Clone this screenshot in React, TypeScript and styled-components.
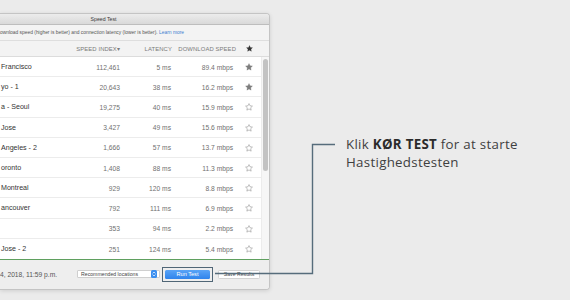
import React from "react";
import styled, { createGlobalStyle } from "styled-components";

const GlobalStyle = createGlobalStyle`
  html, body { margin: 0; padding: 0; background: #ebebeb; }
  body { overflow: hidden; font-family: "Liberation Sans", Arial, sans-serif; }
`;

const Page = styled.div`
  position: relative;
  width: 570px;
  height: 300px;
  display: flex;
  align-items: flex-start;
  background: #ebebeb;
`;

const Window = styled.div`
  margin-top: 13px;
  width: 269px;
  height: 275px;
  display: flex;
  flex-direction: column;
  border: 1px solid #c4c4c4;
  border-left: none;
  border-radius: 0 4px 4px 0;
  background: #f3f3f3;
  box-shadow: 0 1px 4px rgba(0, 0, 0, 0.12);
  overflow: hidden;
`;

const TitleBar = styled.div`
  height: 10px;
  display: flex;
  align-items: center;
  justify-content: center;
  padding-right: 62px;
  background: linear-gradient(#ececec, #d9d9d9);
  border-bottom: 1px solid #bdbdbd;
  font-size: 5.2px;
  color: #3a3a3a;
`;

const Info = styled.div`
  height: 15px;
  display: flex;
  align-items: center;
  border-bottom: 1px solid #dedede;
  font-size: 4.9px;
  color: #555;
  white-space: nowrap;
`;

const Link = styled.span`
  color: #3f7fd1;
`;

const cols = "70px 50px 51px 62px 28px";

const HeaderRow = styled.div`
  height: 15px;
  display: grid;
  grid-template-columns: ${cols};
  align-items: center;
  border-bottom: 1px solid #dcdcdc;
  font-size: 5.9px;
  color: #7a7a7a;
  letter-spacing: 0.1px;
`;

const HeadCell = styled.div<{ $shift?: number }>`
  text-align: right;
  margin-right: ${(p) => p.$shift ?? 0}px;
  white-space: nowrap;
`;

const StarCell = styled.div`
  display: flex;
  justify-content: center;
  padding-left: 4px;
`;

const Body = styled.div`
  height: 202px;
  display: flex;
  background: #fff;
`;

const Rows = styled.div`
  flex: 1;
  display: flex;
  flex-direction: column;
`;

const Row = styled.div`
  height: 20.2px;
  box-sizing: border-box;
  display: grid;
  grid-template-columns: ${cols};
  align-items: center;
  padding-top: 1px;
  border-bottom: 1px solid #ececec;
  &:last-child { border-bottom: none; }
`;

const Name = styled.div`
  font-size: 7.1px;
  color: #333;
  white-space: nowrap;
  padding-left: 1px;
`;

const Num = styled.div`
  font-size: 6.7px;
  color: #6f6f6f;
  text-align: right;
  white-space: nowrap;
`;

const Track = styled.div`
  width: 7px;
  background: #f6f6f6;
  border-left: 1px solid #ececec;
  display: flex;
  justify-content: center;
  padding-top: 2px;
`;

const Thumb = styled.div`
  width: 4.5px;
  height: 112px;
  border-radius: 3px;
  background: #c3c3c3;
`;

const GreenLine = styled.div`
  height: 1px;
  background: #5fa05f;
`;

const Footer = styled.div`
  flex: 1;
  display: flex;
  align-items: center;
  background: #eeeeee;
  padding-bottom: 1px;
`;

const DateText = styled.div`
  width: 77px;
  font-size: 6.7px;
  color: #555;
  white-space: nowrap;
`;

const Select = styled.div`
  width: 83px;
  height: 8px;
  box-sizing: border-box;
  display: flex;
  align-items: center;
  justify-content: space-between;
  background: #fff;
  border: 1px solid #cfcfcf;
  border-radius: 1px;
  padding-left: 3px;
  font-size: 5.2px;
  color: #444;
  white-space: nowrap;
`;

const Stepper = styled.div`
  width: 6px;
  height: 8px;
  margin-right: 2px;
  border-radius: 1.5px;
  background: #3b8ff0;
  display: flex;
  align-items: center;
  justify-content: center;
`;

const Highlight = styled.div`
  margin-left: 2px;
  padding: 2px;
  border: 1.5px solid #506676;
  display: flex;
`;

const RunButton = styled.div`
  width: 45px;
  height: 9px;
  border-radius: 1.5px;
  background: linear-gradient(#5aa4f7, #2f84ec);
  color: #fff;
  font-size: 5.6px;
  display: flex;
  align-items: center;
  justify-content: center;
`;

const SaveButton = styled.div`
  margin-left: 5px;
  width: 42px;
  height: 9px;
  box-sizing: border-box;
  border: 1px solid #d3d3d3;
  border-radius: 1.5px;
  background: #fff;
  color: #444;
  font-size: 5.2px;
  white-space: nowrap;
  display: flex;
  align-items: center;
  justify-content: center;
`;

const Callout = styled.div`
  margin-left: 76px;
  margin-top: 136px;
  font-family: "Open Sans", "Liberation Sans", sans-serif;
  font-size: 13.3px;
  letter-spacing: 0.3px;
  line-height: 17.7px;
  color: #3f3f3f;
  white-space: nowrap;
`;

const Bold = styled.b`
  font-weight: 700;
  color: #2b2b2b;
`;

const Connector = styled.svg`
  position: absolute;
  left: 0;
  top: 0;
  pointer-events: none;
`;

const StarIcon: React.FC<{ filled?: boolean; dark?: boolean; size?: number }> = ({
  filled,
  dark,
  size = 8,
}) => (
  <svg width={size} height={size} viewBox="0 0 24 24">
    <path
      d="M12 1.8l3.1 6.6 7.2.9-5.3 5 1.4 7.1L12 17.9l-6.4 3.5 1.4-7.1-5.3-5 7.2-.9z"
      fill={filled ? (dark ? "#333" : "#7d7d7d") : "none"}
      stroke={filled ? (dark ? "#333" : "#7d7d7d") : "#8a8a8a"}
      strokeWidth={filled ? 1 : 1.6}
      strokeLinejoin="round"
    />
  </svg>
);

const data = [
  ["Francisco", "112,461", "5 ms", "89.4 mbps", true],
  ["yo - 1", "20,643", "38 ms", "16.2 mbps", true],
  ["a - Seoul", "19,275", "40 ms", "15.9 mbps", false],
  ["Jose", "3,427", "49 ms", "15.6 mbps", false],
  ["Angeles - 2", "1,666", "57 ms", "13.7 mbps", false],
  ["oronto", "1,408", "88 ms", "11.3 mbps", false],
  ["Montreal", "929", "120 ms", "8.8 mbps", false],
  ["ancouver", "792", "111 ms", "6.9 mbps", false],
  ["", "353", "94 ms", "2.2 mbps", false],
  ["Jose - 2", "251", "124 ms", "5.4 mbps", false],
] as const;

export default function App() {
  return (
    <>
      <GlobalStyle />
      <Page>
        <Window>
          <TitleBar>Speed Test</TitleBar>
          <Info>
            ownload speed (higher is better) and connection latency (lower is better).&nbsp;
            <Link>Learn more</Link>
          </Info>
          <HeaderRow>
            <div />
            <HeadCell>SPEED INDEX▾</HeadCell>
            <HeadCell $shift={-1}>LATENCY</HeadCell>
            <HeadCell $shift={-3}>DOWNLOAD SPEED</HeadCell>
            <StarCell>
              <StarIcon filled dark size={7} />
            </StarCell>
          </HeaderRow>
          <Body>
            <Rows>
              {data.map(([name, idx, lat, dl, fav], i) => (
                <Row key={i}>
                  <Name>{name}</Name>
                  <Num>{idx}</Num>
                  <Num>{lat}</Num>
                  <Num>{dl}</Num>
                  <StarCell>
                    <StarIcon filled={fav} />
                  </StarCell>
                </Row>
              ))}
            </Rows>
            <Track>
              <Thumb />
            </Track>
          </Body>
          <GreenLine />
          <Footer>
            <DateText>4, 2018, 11:59 p.m.</DateText>
            <Select>
              Recommended locations
              <Stepper>
                <svg width="4" height="6" viewBox="0 0 4 6">
                  <path d="M0.6 2.4L2 1l1.4 1.4M0.6 3.6L2 5l1.4-1.4" fill="none" stroke="#fff" strokeWidth="0.7" />
                </svg>
              </Stepper>
            </Select>
            <Highlight>
              <RunButton>Run Test</RunButton>
            </Highlight>
            <SaveButton>Save Results</SaveButton>
          </Footer>
        </Window>
        <Callout>
          Klik <Bold>KØR TEST</Bold> for at starte
          <br />
          Hastighedstesten
        </Callout>
        <Connector width="570" height="300" viewBox="0 0 570 300">
          <path d="M215 273.5H312.5V144.5H335" fill="none" stroke="#566c7b" strokeWidth="1.4" />
        </Connector>
      </Page>
    </>
  );
}
